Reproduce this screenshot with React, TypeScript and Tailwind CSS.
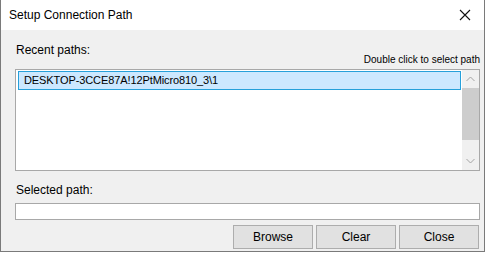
import React from 'react';

const font = { fontFamily: '"Liberation Sans", Arial, sans-serif' };

function Chevron({ up }: { up?: boolean }) {
  return (
    <svg width="9" height="6" viewBox="0 0 9 6" className="block">
      <path
        d={up ? 'M0.5 5 L4.5 1 L8.5 5' : 'M0.5 1 L4.5 5 L8.5 1'}
        fill="none"
        stroke="#a3a3a3"
        strokeWidth="1"
      />
    </svg>
  );
}

export default function App() {
  const paths = ['DESKTOP-3CCE87A!12PtMicro810_3\\1'];

  return (
    <div className="w-[487px] h-[253px] bg-white text-black" style={font}>
      <div className="w-[485px] h-[252px] flex flex-col border-x border-b border-[#7a7a7a] bg-[#f0f0f0]">
        {/* title bar */}
        <div className="h-[30px] flex items-center justify-between bg-white pl-[8px] pr-[13px]">
          <span className="text-[12px] leading-none">Setup Connection Path</span>
          <svg width="12" height="12" viewBox="0 0 12 12">
            <path d="M1 1 L11 11 M11 1 L1 11" stroke="#111" strokeWidth="1.1" />
          </svg>
        </div>

        <div className="flex flex-col pl-[14px] pr-[4px]">
          <div className="h-[39px] flex items-end justify-between pb-[1px]">
            <span className="text-[12px] leading-none self-start mt-[14px] ml-[1px]">Recent paths:</span>
            <span className="text-[10px] leading-none mb-[3px]">Double click to select path</span>
          </div>

          {/* list box */}
          <div className="h-[102px] flex border border-[#a8a8a8] bg-white">
            <div className="flex-1 pt-[1px] pl-[2px] pr-[1px]">
              {paths.map((p) => (
                <div
                  key={p}
                  className="h-[19px] flex items-center border border-[#26a0da] bg-[#cce8ff] pl-[5px] text-[11px] tracking-[-0.1px] leading-none"
                >
                  {p}
                </div>
              ))}
            </div>
            <div className="w-[17px] flex flex-col bg-[#f0f0f0]">
              <div className="h-[18px] flex items-center justify-center">
                <Chevron up />
              </div>
              <div className="h-[52px] bg-[#cdcdcd]" />
              <div className="flex-1" />
              <div className="h-[18px] flex items-center justify-center">
                <Chevron />
              </div>
            </div>
          </div>

          <span className="text-[12px] leading-none mt-[13px] ml-[1px]">Selected path:</span>
          <div className="h-[17px] mt-[7px] border border-[#a8a8a8] bg-white" />

          <div className="flex justify-end gap-[3px] mt-[5px] pr-[1px]">
            {['Browse', 'Clear', 'Close'].map((b) => (
              <button
                key={b}
                className="w-[80px] h-[24px] border border-[#adadad] bg-[#e1e1e1] text-[12px] leading-none"
              >
                {b}
              </button>
            ))}
          </div>
        </div>
      </div>
    </div>
  );
}
